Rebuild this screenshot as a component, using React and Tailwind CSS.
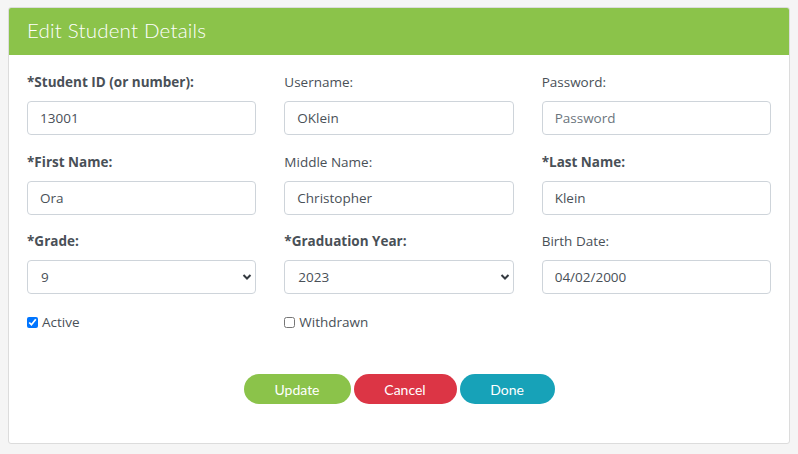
import { useState } from "react";

const label = "block text-[13.5px] leading-[21px] text-[#495057] mb-[8px]";
const input =
  "w-full h-[34px] rounded-[4px] border border-[#ced4da] bg-white px-[12px] text-[13.5px] text-[#495057] placeholder:text-[#6c757d] outline-none";

function Field({ text, bold, value, placeholder }) {
  return (
    <div>
      <label className={`${label} ${bold ? "font-bold" : ""}`}>{text}</label>
      <input className={input} defaultValue={value} placeholder={placeholder} />
    </div>
  );
}

function SelectField({ text, value }) {
  return (
    <div>
      <label className={`${label} font-bold`}>{text}</label>
      <div className="relative">
        <select
          defaultValue={value}
          className={`${input} appearance-none pl-[13px]`}
        >
          <option>{value}</option>
        </select>
        <svg
          className="absolute right-[4px] top-[13px] pointer-events-none"
          width="10"
          height="8"
          viewBox="0 0 10 8"
        >
          <path d="M1.5 2 L5 5.5 L8.5 2" fill="none" stroke="#343a40" strokeWidth="2" />
        </svg>
      </div>
    </div>
  );
}

export default function App() {
  const [active, setActive] = useState(true);
  const [withdrawn, setWithdrawn] = useState(false);
  return (
    <div
      className="w-full h-[454px] bg-[#f5f5f5] pt-[7px] px-[8px]"
      style={{ fontFamily: '"Open Sans", sans-serif' }}
    >
      <div className="h-[437px] bg-white border border-[#dcdcdc] rounded-[3px] overflow-hidden flex flex-col">
        <div className="h-[47px] bg-[#8bc34a] flex items-center px-[18px] pb-[2px]">
          <h1
            className="text-white text-[20.5px] font-light tracking-[0.2px]"
            style={{ fontFamily: "Lato, sans-serif" }}
          >
            Edit Student Details
          </h1>
        </div>
        <div className="px-[18px] pt-[17px]">
          <div className="grid grid-cols-3 gap-x-[28px] gap-y-[16.5px]">
            <Field text="*Student ID (or number):" bold value="13001" />
            <Field text="Username:" value="OKlein" />
            <Field text="Password:" placeholder="Password" />
            <Field text="*First Name:" bold value="Ora" />
            <Field text="Middle Name:" value="Christopher" />
            <Field text="*Last Name:" bold value="Klein" />
            <SelectField text="*Grade:" value="9" />
            <SelectField text="*Graduation Year:" value="2023" />
            <div>
              <label className={label}>Birth Date:</label>
              <input className={`${input} px-[4px]`} defaultValue="04/02/2000" />
            </div>
          </div>
          <div className="grid grid-cols-3 gap-x-[28px] mt-[18px]">
            <label className="flex items-center gap-[4px] text-[13.5px] text-[#495057]">
              <input
                type="checkbox"
                checked={active}
                onChange={() => setActive(!active)}
                className="w-[11px] h-[11px] accent-[#0075ff]"
              />
              Active
            </label>
            <label className="flex items-center gap-[4px] text-[13.5px] text-[#495057]">
              <input
                type="checkbox"
                checked={withdrawn}
                onChange={() => setWithdrawn(!withdrawn)}
                className="w-[11px] h-[11px]"
              />
              Withdrawn
            </label>
          </div>
          <div
            className="flex justify-center gap-[3px] mt-[42px] text-white text-[14px]"
            style={{ fontFamily: "Lato, sans-serif" }}
          >
            <button className="w-[107px] h-[30px] rounded-full bg-[#8bc34a]">Update</button>
            <button className="w-[103px] h-[30px] rounded-full bg-[#dc3545]">Cancel</button>
            <button className="w-[95px] h-[30px] rounded-full bg-[#17a2b8]">Done</button>
          </div>
        </div>
      </div>
    </div>
  );
}
